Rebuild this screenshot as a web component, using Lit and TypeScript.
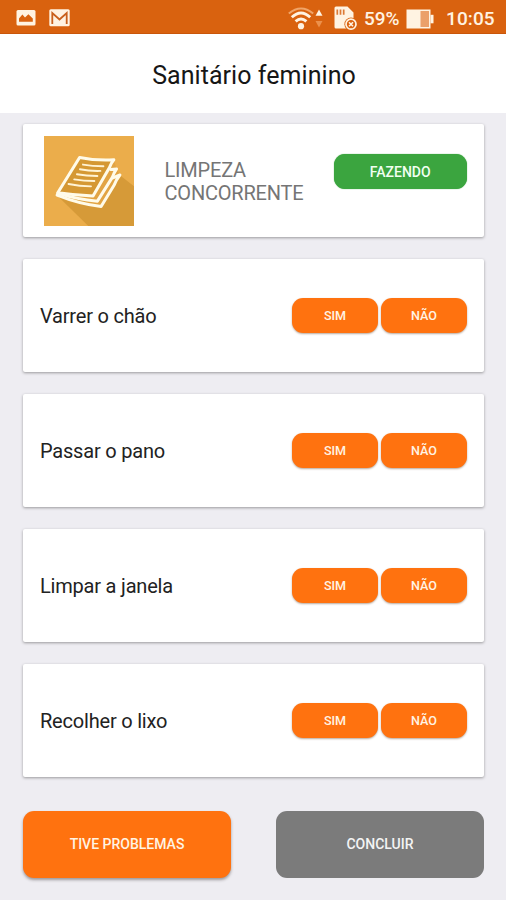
import { LitElement, html, css, svg } from "lit";
import { customElement, property } from "lit/decorators.js";

@customElement("status-bar")
class StatusBar extends LitElement {
  static styles = css`
    :host {
      display: flex;
      align-items: center;
      height: 34px;
      box-sizing: border-box;
      padding: 0 10px 0 16px;
      background: #d9620f;
      border-bottom: 1px solid #c9560a;
      color: #fff3e2;
      font: 500 19px/34px Roboto, sans-serif;
    }
    svg { display: block; flex: none; }
    .mail { margin-left: 13px; }
    .wifi { margin-left: auto; }
    .arrows { margin-left: 1px; }
    .sd { margin-left: 11px; }
    .percent { width: 36px; margin: 4px 0 0 7px; white-space: nowrap; }
    .battery { margin-left: 6px; }
    .clock { width: 50px; margin: 4px 0 0 12px; letter-spacing: 0.1px; white-space: nowrap; }
  `;
  render() {
    return html`
      <svg width="20" height="34" viewBox="0 0 20 34">
        <rect x=".5" y="10" width="19" height="15.5" rx="1.5" fill="#fff3e2" />
        <path d="M3 21.8v-3.4l3.4-3.8 2.6 2.8 3.4-3.2 4.4 4.4v3.2z" fill="#d9620f" />
      </svg>
      <svg class="mail" width="21" height="34" viewBox="0 0 21 34">
        <rect x=".3" y="9.3" width="20.4" height="17" rx="1.5" fill="#fff3e2" />
        <path d="M3.3 24V13l7.2 6.5 7.2-6.5v11" fill="none" stroke="#c9601c" stroke-width="1.8" />
      </svg>
      <svg class="wifi" width="26" height="34" viewBox="0 0 26 34" fill="none">
        <path d="M.8 13.6Q13 3.5 25.2 13.6" stroke="#f0a468" stroke-width="2" />
        <path d="M3.8 17.2Q13 8.6 22.2 17.2M7.6 21.4Q13 16.4 18.4 21.4" stroke="#fff3e2" stroke-width="2.9" />
        <circle cx="13" cy="26.2" r="3.1" fill="#fff3e2" />
      </svg>
      <svg class="arrows" width="8" height="34" viewBox="0 0 8 34">
        <path d="M.5 15.8 4 9.5l3.5 6.3z" fill="#fff3e2" />
        <path d="M.5 21 4 27.5l3.5-6.5z" fill="#ec914c" />
      </svg>
      <svg class="sd" width="23" height="34" viewBox="0 0 23 34">
        <path d="M2 6.5h11.5l6 6v16H2A1.5 1.5 0 0 1 .5 27V8A1.5 1.5 0 0 1 2 6.5z" fill="#fff3e2" />
        <path d="M3.3 9.5v5.3M6.5 9.5v5.3M9.7 9.5v5.3" stroke="#dc7a36" stroke-width="1.7" />
        <circle cx="17" cy="24.2" r="6.6" fill="#d9620f" />
        <circle cx="17" cy="24.2" r="5" fill="none" stroke="#fff3e2" stroke-width="1.7" />
        <path d="m15 22.2 4 4m0-4-4 4" stroke="#fff3e2" stroke-width="1.6" />
      </svg>
      <span class="percent">59%</span>
      <svg class="battery" width="28" height="34" viewBox="0 0 28 34">
        <rect x=".5" y="9.5" width="24" height="19" fill="#fff3e2" />
        <rect x="14.5" y="11" width="8.5" height="16" fill="#eba06a" />
        <rect x="24.5" y="14.8" width="3" height="8.5" fill="#fff3e2" />
      </svg>
      <span class="clock">10:05</span>
    `;
  }
}

@customElement("pill-button")
class PillButton extends LitElement {
  @property({ reflect: true }) kind = "answer";
  @property() label = "";
  static styles = css`
    :host { display: block; flex: none; }
    button {
      display: block;
      width: 100%;
      height: 100%;
      padding: 1px 0 0;
      border: 0;
      border-radius: 11px;
      background: #ff720f;
      color: #fff4e4;
      font: 500 12.6px/1 Roboto, sans-serif;
      box-shadow: 0 1px 2px rgba(80, 40, 10, 0.4);
    }
    :host([kind="answer"]) { width: 86px; height: 35.5px; }
    :host([kind="status"]) { width: 133.5px; height: 35.5px; }
    :host([kind="status"]) button {
      background: #3ba53f;
      color: #f1fff1;
      font-size: 14px;
      box-shadow: 0 0 1px #3ba53f;
    }
    :host([kind="problem"]), :host([kind="finish"]) { width: 208px; height: 67px; }
    :host([kind="problem"]) button, :host([kind="finish"]) button {
      padding: 0;
      font-size: 14px;
    }
    :host([kind="problem"]) button { box-shadow: 0 2px 3px rgba(60, 50, 50, 0.45); }
    :host([kind="finish"]) button {
      background: #7b7b7b;
      color: #f4f4f4;
      box-shadow: none;
    }
  `;
  render() {
    return html`<button>${this.label}</button>`;
  }
}

const papers = svg`
  <rect width="268" height="268" fill="#ebad4b" />
  <path d="M40 178 132 268H268V150L226 117z" fill="#d69a38" />
  <path d="M106 64 208 71 216 99 226 117 170 210 41 175z" fill="#e2a443" />
  <path d="M106 64 208 71 146 178 41 170z" fill="#d59833" />
  <g fill="none" stroke="#fffbe9" stroke-width="9" stroke-linejoin="round" stroke-linecap="round">
    <path d="M106 64Q154 74 208 71Q200 80 195 94L146 179Q90 176 41 169Z" />
    <path d="M199 100 216 98Q208 110 203 124L159 194Q100 189 41 171" />
    <path d="M207 124 226 116Q215 130 209 146L170 210Q104 202 39 176" />
  </g>
  <path d="M116 85Q144 90 177 90M107 99Q136 105 168 104M98 114Q126 119 159 119M90 129Q118 134 150 134M73 143Q106 150 140 150" fill="none" stroke="#fff3d4" stroke-width="5.5" stroke-linecap="round" />
`;

@customElement("app-root")
class AppRoot extends LitElement {
  static styles = css`
    :host {
      display: flex;
      flex-direction: column;
      height: 900px;
      background: #eeedf2;
      font-family: Roboto, sans-serif;
    }
    h1 {
      margin: 0;
      height: 79px;
      padding: 2px 0 0 2px;
      box-sizing: border-box;
      background: #fff;
      color: #161616;
      font: 400 25px/79px Roboto, sans-serif;
      letter-spacing: 0.05px;
      text-align: center;
    }
    main {
      display: flex;
      flex-direction: column;
      gap: 22.6px;
      padding: 11px 22px 0 23px;
    }
    .card {
      display: flex;
      align-items: center;
      height: 112.5px;
      box-sizing: border-box;
      padding: 0 17px;
      border-radius: 2px;
      background: #fff;
      box-shadow: 0 1px 3px rgba(0, 0, 0, 0.36);
    }
    .picture { display: block; width: 90px; height: 90px; margin: 1px 0 0 4px; }
    .kind {
      margin: 3px 0 0 30.5px;
      color: #757575;
      font-size: 20px;
      line-height: 23px;
      letter-spacing: -0.2px;
    }
    .card pill-button[kind="status"] { align-self: flex-start; margin: 29.5px 0 0 auto; }
    .task { color: #222; font-size: 20px; line-height: 24px; padding-top: 1px; letter-spacing: -0.2px; }
    .answers { display: flex; gap: 3px; margin-left: auto; }
    footer {
      display: flex;
      justify-content: space-between;
      padding: 33.7px 22px 0 23px;
    }
  `;
  render() {
    const tasks = ["Varrer o chão", "Passar o pano", "Limpar a janela", "Recolher o lixo"];
    return html`
      <status-bar></status-bar>
      <h1>Sanitário feminino</h1>
      <main>
        <section class="card">
          <svg class="picture" viewBox="0 0 268 268">${papers}</svg>
          <div class="kind">LIMPEZA<br />CONCORRENTE</div>
          <pill-button kind="status" label="FAZENDO"></pill-button>
        </section>
        ${tasks.map((task) => html`
          <section class="card">
            <span class="task">${task}</span>
            <div class="answers">
              <pill-button kind="answer" label="SIM"></pill-button>
              <pill-button kind="answer" label="NÃO"></pill-button>
            </div>
          </section>
        `)}
      </main>
      <footer>
        <pill-button kind="problem" label="TIVE PROBLEMAS"></pill-button>
        <pill-button kind="finish" label="CONCLUIR"></pill-button>
      </footer>
    `;
  }
}
